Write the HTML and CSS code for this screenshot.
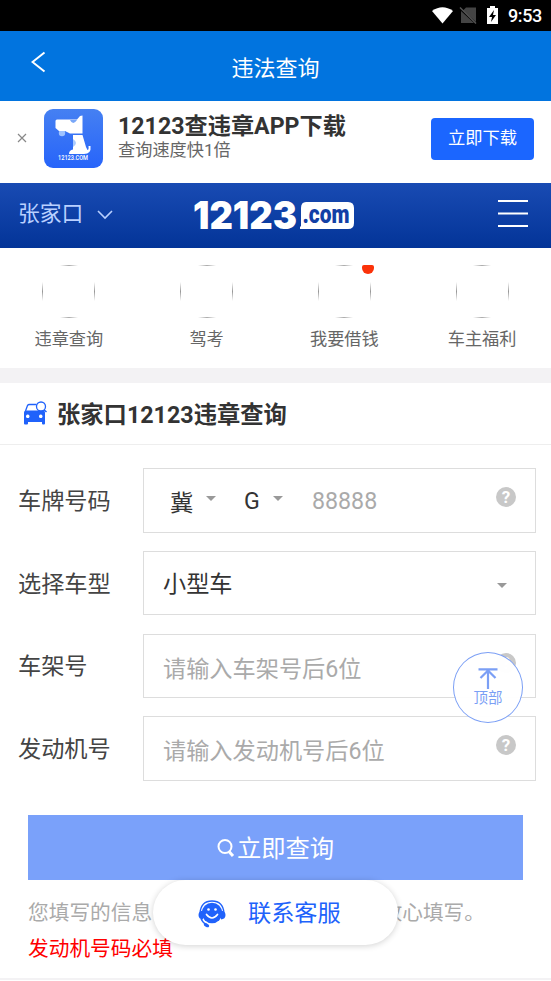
FILE: index.html
```html
<!DOCTYPE html>
<html lang="zh-CN">
<head>
<meta charset="utf-8">
<title>违法查询</title>
<link rel="stylesheet" href="styles.css">
</head>
<body>
<div class="status">
  <svg class="status-icons" width="70" height="20" viewBox="0 0 70 20">
    <path d="M0 5Q10.500-2.500 21 5L10.500 17.500Z" fill="#fff"/>
    <path d="M34 1.500h10V16L31 4.500ZM29 5l13 12H29Z" fill="#444"/>
    <path d="M28 1.500l16 16" stroke="#555" stroke-width="1.500"/>
    <path d="M55 2h3V0h5v2h3v16H55Z" fill="#fff"/>
    <path d="M62 4l-5 7h3l-1 5 5-7h-3Z" fill="#000"/>
  </svg>
  <span class="clock">9:53</span>
</div>
<header class="header">
  <svg class="back" width="16" height="22" viewBox="0 0 16 22"><path d="M13.500 1.500 1.500 11l12 9.500" fill="none" stroke="#fff" stroke-width="2"/></svg>
  <h1>违法查询</h1>
</header>
<section class="banner">
  <svg class="close" width="10" height="10" viewBox="0 0 10 10"><path d="m1 1 8 8m0-8-8 8" stroke="#888" stroke-width="1.200"/></svg>
  <svg class="app-icon" width="59" height="59" viewBox="0 0 59 59">
    <defs><linearGradient id="app" x1="0" y1="0" x2="0" y2="1"><stop offset="0" stop-color="#4580f2"/><stop offset="1" stop-color="#2764fa"/></linearGradient></defs>
    <rect width="59" height="59" rx="9" fill="url(#app)"/>
    <circle cx="18" cy="24" r="3.200" fill="#9fc3ff"/>
    <path d="M13 10.500H33L36 7 38.500 6.500V24.500H26L21 22H15L11.500 19V12Q11.500 10.500 13 10.500Z" fill="#fff"/>
    <path d="M26 11q3 6 7 0Z" fill="#79a7f8"/>
    <path d="M29 26H38.500L42 38 43.500 41Q45 41 44.500 37H46.500Q47.500 45 40 45H25Q25 41 29 40.500Z" fill="#fff"/>
    <path d="M29 30q6 4 0 8Z" fill="#a9caff"/>
    <text x="14" y="50.500" textLength="30" lengthAdjust="spacingAndGlyphs" class="app-name">12123.COM</text>
  </svg>
  <div class="banner-copy">
    <strong>12123查违章APP下载</strong>
    <span>查询速度快1倍</span>
  </div>
  <a class="download">立即下载</a>
</section>
<nav class="nav">
  <span class="city">张家口</span>
  <svg class="chevron" width="16" height="10" viewBox="0 0 16 10"><path d="m1 1 7 7 7-7" fill="none" stroke="#b9d0ff" stroke-width="1.600"/></svg>
  <svg class="logo" width="164" height="32" viewBox="0 0 164 32">
    <text x="1" y="29" textLength="104" lengthAdjust="spacingAndGlyphs" class="logo-num">12123</text>
    <path d="M114 2h42q6 0 6 6v15q0 6-6 6H108v-2l1-1V8q0-6 5-6Z" fill="#fff"/>
    <text x="110.500" y="22.500" textLength="47" lengthAdjust="spacingAndGlyphs" class="logo-com">.com</text>
  </svg>
  <svg class="menu" width="30" height="28" viewBox="0 0 30 28"><path d="M0 1h30M0 13.500h30M0 26h30" stroke="#fff" stroke-width="2.200"/></svg>
</nav>
<section class="shortcuts">
  <a><i class="ring"></i><span>违章查询</span></a>
  <a><i class="ring"></i><span>驾考</span></a>
  <a><i class="ring ring-new"></i><span>我要借钱</span></a>
  <a><i class="ring"></i><span>车主福利</span></a>
</section>
<main>
  <h2 class="title">
    <svg width="25" height="24" viewBox="0 0 25 24">
      <path d="M2.500 10 4.500 4.500Q5 3.500 6.500 3.500h7M20.500 8l1 2" fill="none" stroke="#2062fb" stroke-width="1.300"/>
      <path fill-rule="evenodd" d="M3 9.500H20q2 0 2 2V22.500q0 1-1 1h-1q-1 0-1-1V21H5v1.500q0 1-1 1H2q-1 0-1-1V11.500q0-2 2-2Zm1.700 4a1.800 1.800 0 1 0 .1 0Zm13 0a1.800 1.800 0 1 0 .1 0Z" fill="#2062fb"/>
      <circle cx="18" cy="5.500" r="4.500" fill="#fff" stroke="#2062fb" stroke-width="1.300"/><path d="m21 8.700 2.500 2.300" stroke="#2062fb" stroke-width="1.400"/>
    </svg>
    <span>张家口12123违章查询</span>
  </h2>
  <form class="form">
    <div class="row"><label>车牌号码</label><div class="field plate"><span class="value prov">冀</span><i class="caret"></i><span class="value letter">G</span><i class="caret"></i><span class="hint number">88888</span><b class="help">?</b></div></div>
    <div class="row row-type"><label>选择车型</label><div class="field"><span class="value">小型车</span><i class="caret end"></i></div></div>
    <div class="row row-vin"><label>车架号</label><div class="field"><span class="hint">请输入车架号后6位</span><b class="help">?</b></div></div>
    <div class="row row-engine"><label>发动机号</label><div class="field"><span class="hint">请输入发动机号后6位</span><b class="help">?</b></div></div>
  </form>
  <button class="submit"><svg width="19" height="20" viewBox="0 0 19 20"><circle cx="8" cy="9.500" r="6.500" fill="none" stroke="#fff" stroke-width="2"/><path d="m12 14.500 4 4.500" stroke="#fff" stroke-width="3"/></svg><span>立即查询</span></button>
  <p class="note"><span>您填写的信息</span><span>放心填写。</span></p>
  <p class="warn">发动机号码必填</p>
</main>
<a class="to-top">
  <svg width="20" height="21" viewBox="0 0 20 21"><path d="M.500 1.300h19M10 2v19M2.500 10 10 2.500l7.500 7.500" fill="none" stroke="#7b9ff5" stroke-width="2.200"/></svg>
  <span>顶部</span>
</a>
<a class="service">
  <svg width="28" height="28" viewBox="0 0 28 28">
    <path d="M2 13Q3 1 14 1T26 13" fill="none" stroke="#2062fb" stroke-width="1.300"/>
    <circle cx="14" cy="13" r="10.300" fill="#2062fb"/>
    <path d="M5 10.500v9q-4.500-.5-4.500-4.500T5 10.500ZM23 10.500v9q4.500-.5 4.500-4.500T23 10.500Z" fill="#2062fb"/>
    <path d="M3 18.500q2 5 6 6" fill="none" stroke="#2062fb" stroke-width="1.500"/><ellipse cx="8.500" cy="25.300" rx="2.800" ry="1.700" transform="rotate(25 8.500 25.300)" fill="#2062fb"/>
    <circle cx="10.500" cy="9.500" r="1.300" fill="#fff"/><circle cx="17.500" cy="9.500" r="1.300" fill="#fff"/>
    <path d="M8.500 14.500q5.500 7 11 0" fill="none" stroke="#fff" stroke-width="1.700" stroke-linecap="round"/>
  </svg>
  <span>联系客服</span>
</a>
</body>
</html>
```
FILE: styles.css
```css
* { box-sizing: border-box; }
body {
  margin: 0; width: 551px; height: 981px; overflow: hidden; position: relative;
  background: #fff; color: #333;
  font-family: Roboto, "Noto Sans CJK SC", sans-serif;
}
h1, h2, p { margin: 0; font-weight: 400; }
i, b { font-style: normal; }
svg { display: block; flex: none; }
span, strong, label, p { white-space: nowrap; }

.status { height: 31px; background: #000; display: flex; align-items: center; justify-content: flex-end; padding-right: 10px; color: #fff; }
.status-icons { margin-right: 6px; }
.clock { font-size: 18px; font-weight: 500; line-height: 31px; width: 33px; letter-spacing: -.4px; }

.header { height: 70px; background: #0174df; display: flex; padding-left: 31px; color: #fff; }
.back { margin-top: 20px; }
.header h1 { flex: 1; text-align: center; font-size: 22px; line-height: 75px; padding-right: 47px; }

.banner { height: 82px; display: flex; align-items: flex-start; padding-left: 17px; }
.close { margin: 32px 17px 0 0; }
.app-icon { margin-top: 8px; }
.app-name { font: 500 7px Roboto, sans-serif; fill: #fff; }
.banner-copy { display: flex; flex-direction: column; margin: 11px 0 0 15px; width: 313px; }
.banner-copy strong { font-size: 23.200px; line-height: 29px; font-weight: 700; }
.banner-copy span { font-size: 17.200px; line-height: 20px; color: #666; margin-top: -1px; }
.download { margin-top: 17px; width: 103px; height: 42px; border-radius: 4px; background: #1b66ff; color: #fff; font-size: 17.300px; line-height: 41px; text-align: center; }

.nav { height: 65px; background: linear-gradient(#194bb3, #033498); display: flex; align-items: center; padding: 0 23px 0 18px; }
.city { width: 80px; font-size: 21.800px; line-height: 30px; color: #b9d0ff; padding-bottom: 4px; }
.chevron { margin: -2px 79px 0 -1px; }
.logo { overflow: visible; }
.logo-num { font: 900 38px Inter, sans-serif; fill: #fff; }
.logo-com { font: 900 25px Roboto, sans-serif; fill: #123fa6; }
.menu { margin-left: auto; margin-top: -4px; }

.shortcuts { height: 135px; border-bottom: 15px solid #f3f2f4; display: flex; padding-top: 17px; }
.shortcuts a { flex: 1; display: flex; flex-direction: column; align-items: center; }
.shortcuts span { font-size: 17.200px; line-height: 24px; margin-top: 9px; color: #666; }
.ring {
  position: relative; width: 53px; height: 53px;
  background:
    linear-gradient(90deg, transparent, #aaa, transparent) 50% 0 / 18px 1px,
    linear-gradient(90deg, transparent, #aaa, transparent) 50% 100% / 18px 1px,
    linear-gradient(transparent, #999, transparent) 0 50% / 1px 19px,
    linear-gradient(transparent, #999, transparent) 100% 50% / 1px 19px;
  background-repeat: no-repeat;
}
.ring-new::after { content: ""; position: absolute; right: -3px; top: 0; width: 12px; height: 9px; border-radius: 2px 2px 6px 6px; background: #fb3209; }

.title { height: 62px; border-bottom: 1px solid #eee; display: flex; align-items: center; padding-left: 23px; }
.title svg { margin-top: -2px; }
.title span { font-size: 23.300px; font-weight: 700; margin: -2px 0 0 9px; }

.form { padding: 23px 15px 0 18px; }
.row { display: flex; height: 65px; }
.row label { width: 125px; font-size: 23.200px; line-height: 67px; color: #444; }
.field { flex: 1; display: flex; align-items: center; border: 1px solid #ddd; padding: 1px 19px 0; font-size: 23.200px; }
.row-type { margin-top: 18px; height: 64px; }
.row-type label { line-height: 66px; }
.row-type .field { padding: 0 19px 3px; }
.row-vin { margin-top: 19px; height: 64px; }
.row-vin label { line-height: 65px; }
.row-engine { margin-top: 18px; }
.plate { padding-left: 26px; }
.value { color: #333; }
.prov { width: 36px; }
.letter { width: 30px; margin-left: 27px; padding-left: 1px; }
.number { margin-left: 29px; }
.hint { color: #aaa; }
.caret { border: 5.500px solid transparent; border-top-color: #999; border-bottom: 0; margin-top: -5px; }
.end { margin: 7px 9px 0 auto; }
.help { margin: -8px 0 0 auto; width: 20px; height: 20px; border-radius: 50%; background: #c8c8c8; color: #fff; font-size: 17px; font-weight: 700; line-height: 20px; text-align: center; }

.submit { margin: 34px 0 0 28px; width: 495px; height: 65px; border: 0; padding: 0 0 2px; background: #7aa1fa; color: #fff; font: 24.300px Roboto, "Noto Sans CJK SC", sans-serif; display: flex; align-items: center; justify-content: center; gap: 1px; }
.submit span { margin-top: -1px; }
.note, .warn { padding-left: 28px; font-size: 20.700px; line-height: 36px; }
.note { color: #aaa; margin-top: 15px; display: flex; justify-content: space-between; width: 485px; }
.warn { color: #f00; }
main { height: 597px; border-bottom: 2px solid #f3f2f4; }

.to-top { position: absolute; left: 453px; top: 652px; width: 70px; height: 71px; border: 1px solid #7b9ff5; border-radius: 50%; background: rgba(255,255,255,.97); color: #7b9ff5; display: flex; flex-direction: column; align-items: center; padding-top: 15px; }
.to-top span { font-size: 14.500px; line-height: 20px; }
.service { position: absolute; left: 153px; top: 880px; width: 245px; height: 65px; border-radius: 33px; background: #fff; box-shadow: 0 1px 6px rgba(0,0,0,.18); display: flex; align-items: center; padding-left: 45px; color: #2062fb; }
.service span { margin: -4px 0 0 22px; font-size: 23.200px; }
.service svg { margin-top: 3px; }
```
